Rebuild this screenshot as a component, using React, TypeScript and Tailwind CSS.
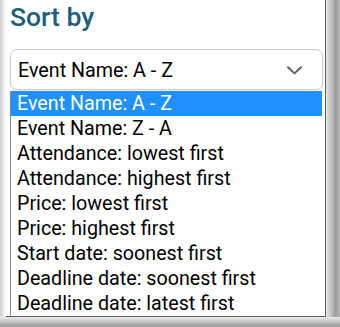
const options = [
  'Event Name: A - Z',
  'Event Name: Z - A',
  'Attendance: lowest first',
  'Attendance: highest first',
  'Price: lowest first',
  'Price: highest first',
  'Start date: soonest first',
  'Deadline date: soonest first',
  'Deadline date: latest first',
];

export default function App() {
  const selected = 0;

  return (
    <div className="w-[340px] h-[327px] flex flex-col bg-white font-['Roboto',sans-serif] overflow-hidden">
      <div className="flex h-[317px]">
        <div className="w-[6px] bg-linear-to-r from-[#cfcfcf] to-white" />
        <div className="w-[320px] pl-[4px] pr-[2px] bg-white border-r border-b border-[#5f5f5f] flex flex-col">
          <h2 className="pt-[2px] h-[50px] text-[26.5px] leading-[30px] font-medium text-[#215d7c]">
            Sort by
          </h2>

          <div className="h-[42px] rounded-[7px] border border-[#cdcdcd] bg-white shadow-[0_1px_2px_rgba(0,0,0,0.08)] flex items-center justify-between pl-[7px] pr-[20px]">
            <span className="text-[19.7px] leading-[24px] pt-[3px] text-black">Event Name: A - Z</span>
            <svg width="15" height="9" viewBox="0 0 15 9" fill="none" className="mt-[3px]">
              <path d="M1 1.2 7.5 7.4 14 1.2" stroke="#5c6068" strokeWidth="2" strokeLinecap="round" strokeLinejoin="round" />
            </svg>
          </div>

          <ul className="mt-[1px] mr-[1px] border-l border-[#8a8a8a] bg-white">
            {options.map((option, i) => (
              <li
                key={option}
                className={`h-[25px] pl-[6px] text-[19.7px] leading-[25px] whitespace-nowrap ${
                  i === selected ? 'bg-[#1e90ff] text-white' : 'text-black'
                }`}
              >
                {option}
              </li>
            ))}
          </ul>
        </div>
        <div className="w-[14px] bg-[linear-gradient(to_right,#e6e6e6,#c4c4c4_35%,#9a9a9a_70%,#bcbcbc)]" />
      </div>
      <div className="h-[10px] bg-[linear-gradient(to_bottom,#ececec,#c8c8c8_40%,#a0a0a0_85%,#ababab)]" />
    </div>
  );
}
